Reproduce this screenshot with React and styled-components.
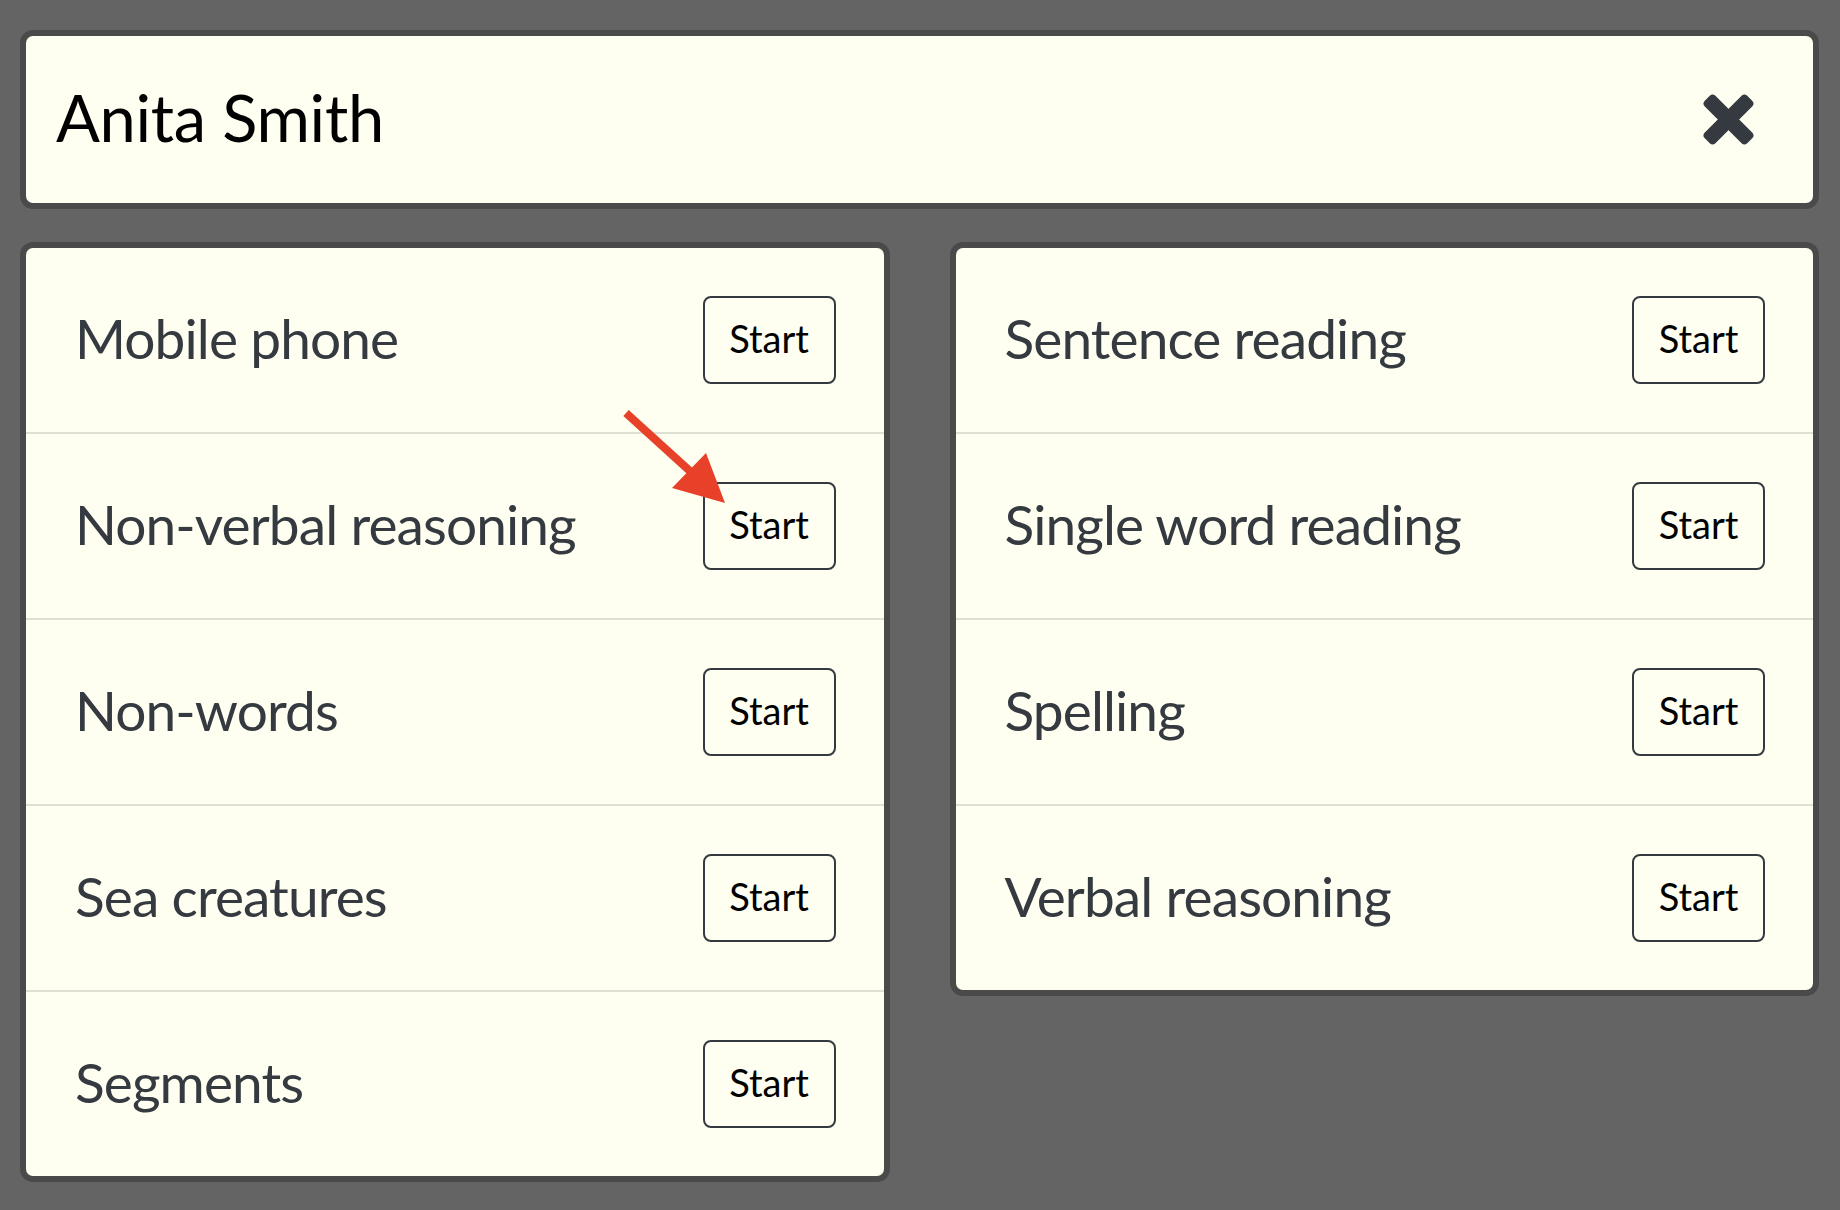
import React from "react";
import styled, { createGlobalStyle } from "styled-components";

const GlobalStyle = createGlobalStyle`
  html, body {
    margin: 0;
    padding: 0;
    background: #646464;
  }
  body {
    font-family: Lato, "Open Sans", sans-serif;
  }
  * { box-sizing: border-box; }
`;

const Page = styled.div`
  width: 1840px;
  min-height: 1210px;
  padding: 30px 21px 0 20px;
  background: #646464;
`;

const Card = styled.div`
  background: #fefff1;
  border: 6px solid #4a4a4a;
  border-radius: 13px;
  overflow: visible;
`;

const Header = styled(Card)`
  height: 179px;
  display: flex;
  align-items: center;
  justify-content: space-between;
  padding: 0 58px 0 30px;
  margin-bottom: 33px;
`;

const Name = styled.h1`
  margin: 0;
  padding-bottom: 5px;
  font-family: Lato, sans-serif;
  font-weight: 400;
  font-size: 65px;
  color: #000;
  letter-spacing: -0.3px;
`;

const CloseButton = styled.button`
  border: 0;
  background: transparent;
  padding: 0;
  width: 53px;
  height: 53px;
  display: flex;
  cursor: pointer;
`;

const Columns = styled.div`
  display: grid;
  grid-template-columns: 1fr 1fr;
  column-gap: 60px;
  align-items: start;
`;

const Row = styled.div`
  display: flex;
  align-items: center;
  justify-content: space-between;
  padding: 48px 48px 48px 49px;
  border-bottom: 2px solid #dfdfd3;
  &:last-child { border-bottom: 0; }
`;

const Label = styled.span`
  padding-bottom: 5px;
  font-family: Lato, sans-serif;
  font-size: 55px;
  color: #343a40;
  letter-spacing: -0.9px;
`;

const ButtonWrap = styled.div`
  position: relative;
`;

const StartButton = styled.button`
  height: 88px;
  width: 133px;
  border: 2px solid #343a40;
  border-radius: 8px;
  background: transparent;
  font-family: Lato, sans-serif;
  font-size: 38px;
  color: #000;
  padding: 0 0 4px;
  cursor: pointer;
`;

const Arrow = styled.svg`
  position: absolute;
  left: -82px;
  top: -74px;
  width: 110px;
  height: 100px;
  pointer-events: none;
`;

const XIcon = () => (
  <svg width="53" height="53" viewBox="0 0 53 53">
    <g fill="#343a40">
      <rect x="19" y="-3.5" width="15" height="60" rx="4" transform="rotate(45 26.5 26.5)" />
      <rect x="19" y="-3.5" width="15" height="60" rx="4" transform="rotate(-45 26.5 26.5)" />
    </g>
  </svg>
);

const left = ["Mobile phone", "Non-verbal reasoning", "Non-words", "Sea creatures", "Segments"];
const right = ["Sentence reading", "Single word reading", "Spelling", "Verbal reasoning"];

const Item = ({ label, pointed }) => (
  <Row>
    <Label>{label}</Label>
    <ButtonWrap>
      {pointed && (
        <Arrow viewBox="0 0 110 100">
          <line x1="5" y1="5" x2="70" y2="64" stroke="#e8412a" strokeWidth="8" />
          <polygon points="104,95 51,80 85,45" fill="#e8412a" />
        </Arrow>
      )}
      <StartButton>Start</StartButton>
    </ButtonWrap>
  </Row>
);

export default function App() {
  return (
    <>
      <GlobalStyle />
      <Page>
        <Header>
          <Name>Anita Smith</Name>
          <CloseButton aria-label="Close">
            <XIcon />
          </CloseButton>
        </Header>
        <Columns>
          <Card>
            {left.map((l) => (
              <Item key={l} label={l} pointed={l === "Non-verbal reasoning"} />
            ))}
          </Card>
          <Card>
            {right.map((l) => (
              <Item key={l} label={l} />
            ))}
          </Card>
        </Columns>
      </Page>
    </>
  );
}
